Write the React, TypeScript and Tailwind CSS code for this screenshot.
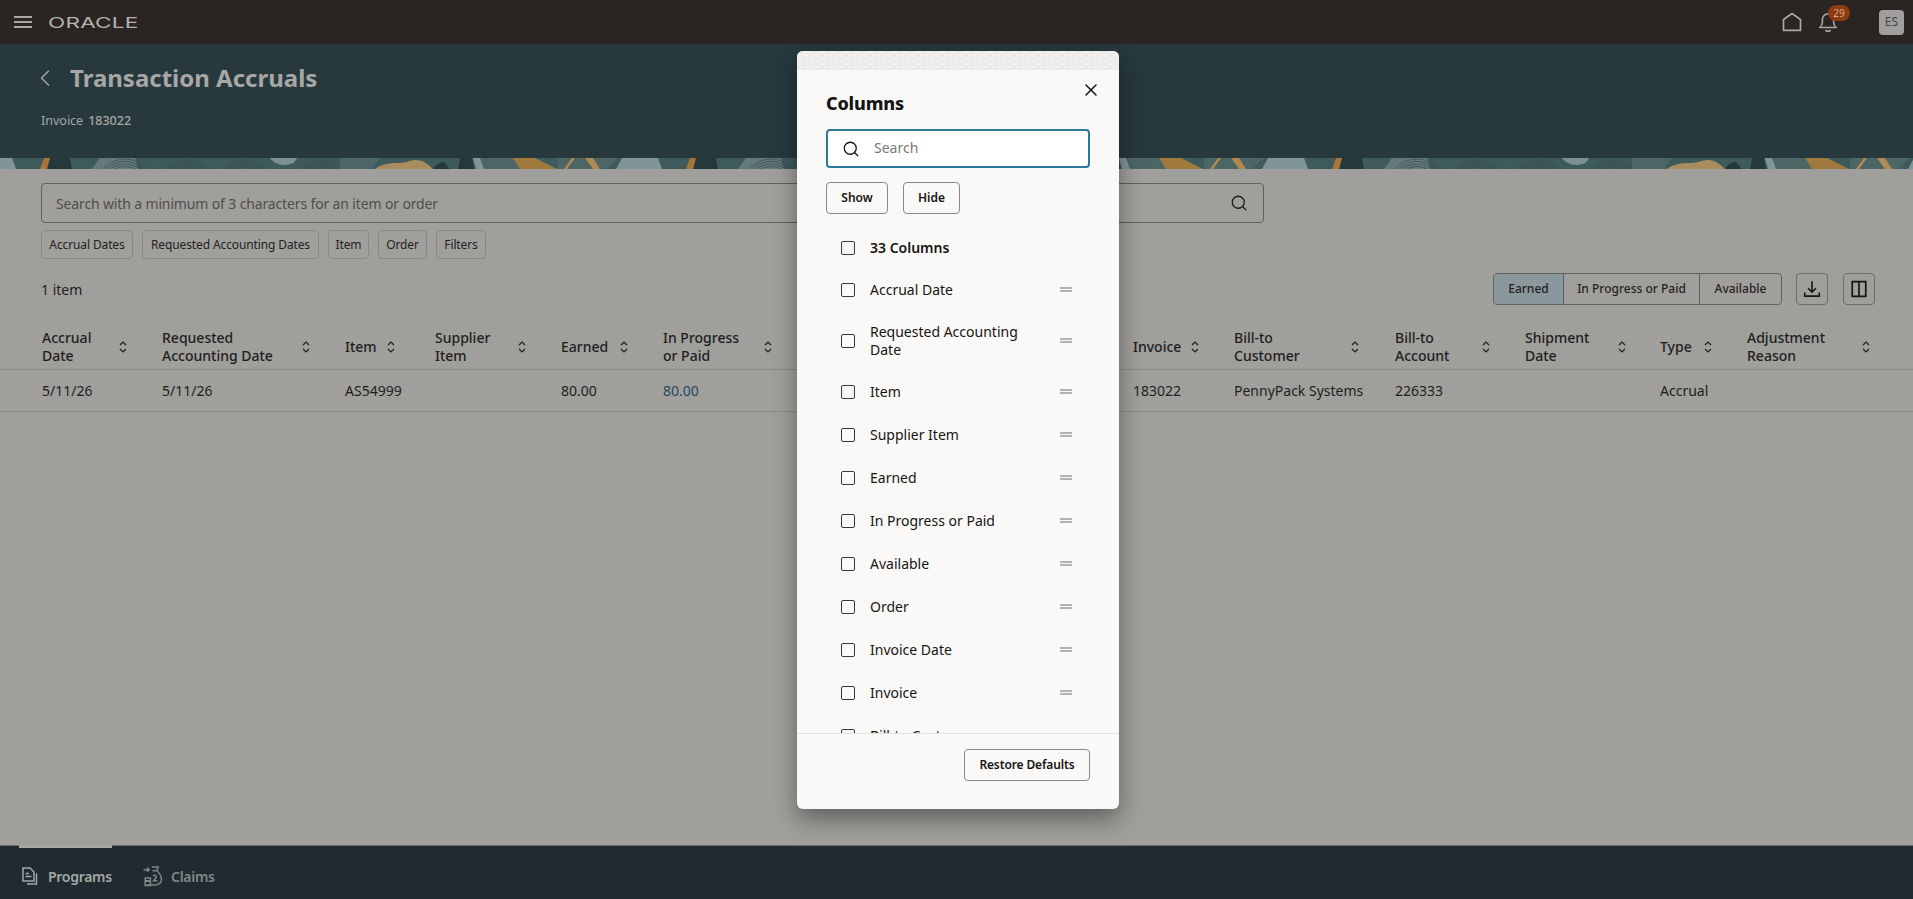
import { ChevronLeft, Search, X } from "lucide-react";

const font = "font-['Noto_Sans',sans-serif]";

// the three columns after In Progress sit behind the dialog, so they stay empty
const columns = [
  { label: "Accrual\nDate", w: "w-[76px]", value: "5/11/26" },
  { label: "Requested\nAccounting Date", w: "w-[139px]", value: "5/11/26" },
  { label: "Item", w: "w-[41px]", value: "AS54999" },
  { label: "Supplier\nItem", w: "w-[82px]", value: "" },
  { label: "Earned", w: "w-[58px]", value: "80.00" },
  { label: "In Progress\nor Paid", w: "w-[100px]", value: "80.00", link: true },
  { label: "", w: "", value: "" },
  { label: "", w: "", value: "" },
  { label: "", w: "", value: "" },
  { label: "Invoice", w: "w-[57px]", value: "183022" },
  { label: "Bill-to\nCustomer", w: "w-[116px]", value: "PennyPack Systems" },
  { label: "Bill-to\nAccount", w: "w-[86px]", value: "226333" },
  { label: "Shipment\nDate", w: "w-[92px]", value: "" },
  { label: "Type", w: "w-[43px]", value: "Accrual" },
  { label: "Adjustment\nReason", w: "w-[114px]", value: "" },
];

const tableGrid =
  "grid grid-cols-[120px_183px_90px_126px_102px_140px_97px_100px_133px_101px_161px_130px_135px_87px_166px] pl-[42px]";

const filters = [
  { label: "Accrual Dates", w: "w-[92px]" },
  { label: "Requested Accounting Dates", w: "w-[177px]" },
  { label: "Item", w: "w-[41px]" },
  { label: "Order", w: "w-[49px]" },
  { label: "Filters", w: "w-[50px]" },
];

const columnRows = [
  "Accrual Date",
  "Requested Accounting Date",
  "Item",
  "Supplier Item",
  "Earned",
  "In Progress or Paid",
  "Available",
  "Order",
  "Invoice Date",
  "Invoice",
  "Bill-to Customer",
];

function SortIcon() {
  return (
    <svg width="10" height="14" viewBox="0 0 10 14" fill="none" stroke="currentColor" strokeWidth="1.2" className="shrink-0">
      <path d="M2 5 5 2 8 5M2 9 5 12 8 9" />
    </svg>
  );
}

function PatternStrip() {
  return (
    <svg className="block h-[11px] w-full shrink-0" aria-hidden="true">
      <defs>
        <pattern id="strip" width="646" height="11" patternUnits="userSpaceOnUse">
          <rect width="646" height="11" fill="#3f5a5a" />
          <path d="M0 0h12l4 11H0z" fill="#80959a" />
          <path d="M44 0h7l-3 11h-8z" fill="#a8743a" />
          <path d="M50 0h20l2 11H47z" fill="#25393d" />
          <path d="M92 11 100 0h35l3 11z" fill="#64797a" />
          <g fill="none" stroke="#2f4548" strokeWidth="0.8" strokeOpacity="0.8">
            <circle cx="125" cy="30" r="29" />
            <circle cx="125" cy="30" r="26.500" />
            <circle cx="125" cy="30" r="24" />
            <circle cx="125" cy="30" r="21.500" />
            <circle cx="185" cy="32" r="30" />
            <circle cx="185" cy="32" r="27.500" />
            <circle cx="185" cy="32" r="25" />
            <circle cx="185" cy="32" r="22.500" />
            <circle cx="245" cy="32" r="30" />
            <circle cx="245" cy="32" r="27.500" />
            <circle cx="245" cy="32" r="25" />
            <circle cx="245" cy="32" r="22.500" />
            <circle cx="322" cy="32" r="30" />
            <circle cx="322" cy="32" r="27.500" />
            <circle cx="322" cy="32" r="25" />
            <circle cx="322" cy="32" r="22.500" />
          </g>
          <path d="M270 0h27c-2 5-7 7-13 7-6 0-11-3-14-7z" fill="#7d8f91" />
          <path d="M340 0h40l-8 11h-32zM480 0h33l12 11h-45zM558 0h60l-12 11h-48z" fill="#4c6666" />
          <path d="M375 11c6-5 14-6 24-6 8 0 10-3 17-3 7 0 12 4 17 9z" fill="#a98d5f" />
          <path d="M433 11c3-5 7-7 11-7l6 7zM460 0h12l2 11h-16z" fill="#25393d" />
          <path d="M473 0h7l4 11h-8z" fill="#80959a" />
          <path d="M513 0h22l22 11h-37z" fill="#a0793c" />
          <path d="M572 0h3l-8 11h-3zM585 0h8l7 11h-7z" fill="#b08a50" />
          <path d="M622 0h24v11h-30z" fill="#80959a" />
        </pattern>
      </defs>
      <rect width="100%" height="11" fill="url(#strip)" />
    </svg>
  );
}

function DragHandle() {
  return (
    <div className="flex w-3 shrink-0 flex-col gap-px">
      <div className="h-[2px] bg-[#b3b2b0]" />
      <div className="h-[2px] bg-[#b3b2b0]" />
    </div>
  );
}

function Checkbox() {
  return <div className="h-[14px] w-[14px] shrink-0 rounded-[2px] border border-[#3a3835] bg-transparent" />;
}

function ColumnsDialog() {
  return (
    <div className="absolute left-[797px] top-[51px] flex h-[758px] w-[322px] flex-col overflow-hidden rounded-md bg-[#fbf9f8] shadow-[0_10px_24px_rgba(0,0,0,0.4)]">
      <svg className="block h-[19px] w-full shrink-0" aria-hidden="true">
        <defs>
          <pattern id="noise" width="12" height="6" patternUnits="userSpaceOnUse">
            <rect width="12" height="6" fill="#edebe9" />
            <path d="M0 1h4M6 4h5M3 3l2 2M9 0l2 2" stroke="#fbf9f8" strokeWidth="1" />
          </pattern>
        </defs>
        <rect width="100%" height="19" fill="url(#noise)" />
      </svg>
      <div className="flex h-[59px] shrink-0 items-start justify-between pl-[29px] pr-[18px]">
        <h2 className="mt-[19px] text-[18px] font-extrabold leading-[28px] tracking-[-0.01em] text-[#161513]">Columns</h2>
        <button className="mt-[10px] text-[#161513]">
          <X size={20} strokeWidth={1.8} />
        </button>
      </div>
      <div className="mx-[29px] flex h-[39px] shrink-0 items-center rounded-[4px] border-2 border-[#2b7a99] bg-white pl-[14px]">
        <Search size={18} strokeWidth={1.7} className="text-[#161513]" />
        <span className="-mt-[2px] ml-[14px] text-[14px] text-[#7b7974]">Search</span>
      </div>
      <div className="mx-[29px] mt-[14px] flex shrink-0 gap-[15px]">
        <button className="h-8 w-[62px] rounded-[4px] border border-[#8a8885] text-[12px] font-semibold text-[#161513]">Show</button>
        <button className="h-8 w-[57px] rounded-[4px] border border-[#8a8885] text-[12px] font-semibold text-[#161513]">Hide</button>
      </div>
      <div className="mt-[13px] min-h-0 flex-1 overflow-hidden pl-[44px] pr-[47px]">
        <div className="flex h-[41px] items-center gap-[15px]">
          <Checkbox />
          <span className="text-[14px] font-semibold text-[#161513]">33 Columns</span>
        </div>
        {columnRows.map((name) => (
          <div key={name} className={`flex items-center gap-[15px] ${name.length > 20 ? "h-[59px]" : "h-[43px]"}`}>
            <Checkbox />
            <span className="w-[160px] text-[14px] leading-[18px] text-[#161513]">{name}</span>
            <div className="ml-auto">
              <DragHandle />
            </div>
          </div>
        ))}
      </div>
      <div className="flex h-[76px] shrink-0 items-start justify-end border-t border-[#e4e2e0] pr-[29px] pt-[15px]">
        <button className="h-8 w-[126px] rounded-[4px] border border-[#8a8885] text-[12px] font-semibold tracking-[-0.01em] text-[#161513]">
          Restore Defaults
        </button>
      </div>
    </div>
  );
}

export default function App() {
  return (
    <div className={`relative flex h-screen flex-col overflow-hidden bg-[#a09f9c] ${font}`}>
      <header className="flex h-11 shrink-0 items-center bg-[#2a2522] pl-[14px] pr-[9px]">
        <div className="flex w-[18px] flex-col gap-[3px]">
          <div className="h-[2px] bg-[#a9a7a5]" />
          <div className="h-[2px] bg-[#a9a7a5]" />
          <div className="h-[2px] bg-[#a9a7a5]" />
        </div>
        <span className="ml-[16px] origin-left scale-x-[1.5] font-['Inter',sans-serif] text-[15px] font-normal leading-none tracking-[0.01em] text-[#b4b2b0]">
          ORACLE
        </span>
        <div className="ml-auto flex items-center">
          <svg width="20" height="20" viewBox="0 0 20 20" fill="none" stroke="#a9a7a5" strokeWidth="1.7">
            <path d="M1.500 18.300V7.500L10 1.500l8.500 6v10.800z" />
          </svg>
          <div className="relative ml-[17px] h-5 w-[18px]">
            <svg width="18" height="20" viewBox="0 0 18 20" fill="none" stroke="#a9a7a5" strokeWidth="1.6">
              <path d="M1 15.500c1.600-1.400 2.400-3 2.400-5.500V7.500a5.600 5.600 0 0 1 11.200 0V10c0 2.500.8 4.100 2.400 5.500z" />
              <path d="M6.500 18c.6 1 1.400 1.400 2.500 1.400s1.900-.4 2.500-1.400" />
            </svg>
            <span className="absolute left-[9px] top-[-7px] flex h-4 w-[22px] items-center justify-center rounded-full bg-[#8e3a12] text-[10px] leading-none text-[#d9a98f]">
              29
            </span>
          </div>
          <div className="ml-[42px] flex h-[25px] w-[25px] items-center justify-center rounded-[4px] bg-[#a09f9e] text-[12px] text-[#4a4845]">
            ES
          </div>
        </div>
      </header>

      <section className="h-[114px] shrink-0 bg-[#27393d] pl-[41px] pt-[19px]">
        <div className="flex h-[30px] items-center">
          <ChevronLeft size={28} strokeWidth={1.2} className="-ml-[10px] text-[#a9a7a5]" />
          <h1 className="ml-[11px] text-[24px] font-bold leading-[30px] text-[#a8a7a6]">Transaction Accruals</h1>
        </div>
        <div className="mt-[20px] flex gap-[5px] text-[12.5px] leading-4 text-[#a8a7a6]">
          <span>Invoice</span>
          <span className="font-medium">183022</span>
        </div>
      </section>
      <PatternStrip />

      <main className="flex min-h-0 flex-1 flex-col">
        <div className="mx-[41px] mt-[14px] flex h-10 w-[1223px] items-center rounded-[4px] border border-[#61605d] pl-[14px] pr-[15px]">
          <span className="text-[14px] tracking-[-0.01em] text-[#4f4d4a]">Search with a minimum of 3 characters for an item or order</span>
          <Search size={18} strokeWidth={1.7} className="ml-auto text-[#201e1c]" />
        </div>
        <div className="mx-[41px] mt-[7px] flex gap-[9px]">
          {filters.map((f) => (
            <div key={f.label} className={`flex h-[29px] items-center justify-center rounded-[4px] border border-[#8a8885] text-[12px] tracking-[-0.01em] text-[#24221f] ${f.w}`}>
              {f.label}
            </div>
          ))}
        </div>
        <div className="mt-[14px] flex h-8 items-center pl-[41px] pr-[38px]">
          <span className="text-[14px] text-[#24221f]">1 item</span>
          <div className="ml-auto flex h-8 overflow-hidden rounded-[4px] border border-[#61605d] text-[12px] font-medium text-[#24221f]">
            <div className="flex w-[70px] items-center justify-center border-r border-[#3f6478] bg-[#8b989b]">Earned</div>
            <div className="flex w-[136px] items-center justify-center border-r border-[#61605d]">In Progress or Paid</div>
            <div className="flex w-[81px] items-center justify-center">Available</div>
          </div>
          <button className="ml-[14px] flex h-8 w-8 items-center justify-center rounded-[4px] border border-[#6f6d6a] text-[#161513]">
            <svg width="18" height="18" viewBox="0 0 16 16" fill="none" stroke="currentColor" strokeWidth="1.4">
              <path d="M8 1v9.500M4.500 7.300 8 10.800l3.500-3.500M1.500 11v3.300h13V11" />
            </svg>
          </button>
          <button className="ml-[15px] flex h-8 w-8 items-center justify-center rounded-[4px] border border-[#6f6d6a] text-[#161513]">
            <svg width="18" height="18" viewBox="0 0 16 16" fill="none" stroke="currentColor" strokeWidth="1.5">
              <path d="M2 1.500h12v13H2zM8 1.500v13" />
            </svg>
          </button>
        </div>

        <div className={`${tableGrid} mt-[15px] h-[50px] items-center border-b border-[#8b8a87] pt-[4px] text-[14px] font-medium leading-[18px] text-[#201e1c]`}>
          {columns.map((c, i) => (
            <div key={i} className="flex items-center">
              {c.label && (
                <>
                  <span className={`whitespace-pre-line ${c.w}`}>{c.label}</span>
                  <SortIcon />
                </>
              )}
            </div>
          ))}
        </div>
        <div className={`${tableGrid} h-[42px] items-center border-b border-[#8b8a87] text-[14px] text-[#201e1c]`}>
          {columns.map((c, i) => (
            <div key={i} className={c.link ? "text-[#1f4a64]" : ""}>
              {c.value}
            </div>
          ))}
        </div>
      </main>

      <footer className="flex h-[54px] shrink-0 border-t border-[#6e6d6b] bg-[#1f2b30] pl-[19px] pt-[7px] text-[14px] font-semibold tracking-[-0.02em]">
        <div className="flex items-center">
          <div className="flex w-[93px] items-center gap-[9px] pl-[3px] text-[#a5a7a7]">
            <svg width="17" height="18" viewBox="0 0 17 18" fill="none" stroke="currentColor" strokeWidth="1.5" className="shrink-0">
              <path d="M1 1h7l4 4v9H1zM3.500 6.500H7M3.500 9.500h6M14.500 6.500v10.500H5" />
            </svg>
            <span>Programs</span>
          </div>
          <div className="ml-[31px] flex items-center gap-[8px] text-[#7f8788]">
            <svg width="20" height="21" viewBox="0 0 18 20" fill="none" stroke="currentColor" strokeWidth="1.4" className="shrink-0">
              <path d="M0 3.500h5M3.300 1.500l2 2-2 2M8 1h6l-1.500 3.500c2.500 2 4.500 5 4.500 8 0 3.500-2.500 5.500-7 5.500H3M8.500 4.500h4M1.500 11.500h5v2.500h-5zM1.500 14.500h5v4h-5zM9 9.500c1.500-1.500 3.500-.5 3 1.500l-2.500 3h3.500" />
            </svg>
            <span>Claims</span>
          </div>
        </div>
        <div className="absolute bottom-[51px] left-[19px] h-[3px] w-[93px] bg-[#a9a7a5]" />
      </footer>

      <ColumnsDialog />
    </div>
  );
}
